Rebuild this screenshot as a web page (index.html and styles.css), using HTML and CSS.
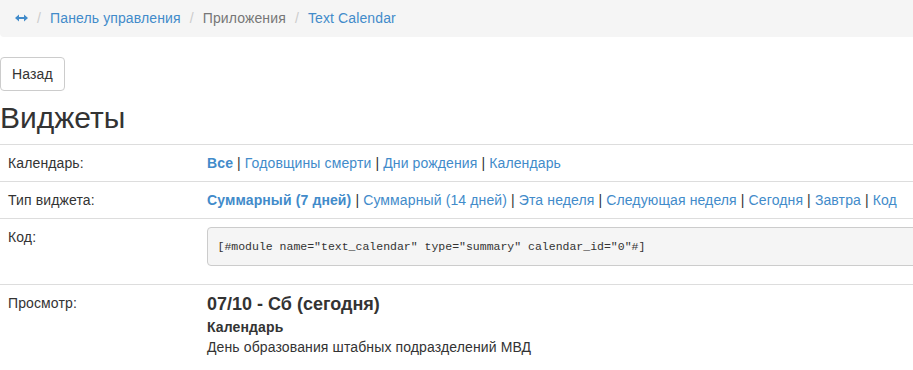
FILE: index.html
```html
<!DOCTYPE html>
<html lang="ru">

<head>
    <meta charset="UTF-8">
    <title>Виджеты - Text Calendar</title>
    <link rel="stylesheet" href="styles.css">
</head>

<body>
    <div class="page">
        <ol class="breadcrumb">
            <li>
                <a href="#" class="home-icon"><svg width="13" height="8" viewBox="0 0 13 8">
                        <path d="M0 4 L4 0.5 L4 3 L9 3 L9 0.5 L13 4 L9 7.5 L9 5 L4 5 L4 7.5 Z" fill="#428bca"/>
                    </svg></a>
            </li>
            <li><a href="#">Панель управления</a></li>
            <li class="active">Приложения</li>
            <li><a href="#">Text Calendar</a></li>
        </ol>

        <a href="#" class="btn">Назад</a>

        <h2>Виджеты</h2>

        <table class="table">
            <tr>
                <td class="label-cell">Календарь:</td>
                <td>
                    <a href="#" class="current">Все</a> |
                    <a href="#">Годовщины смерти</a> |
                    <a href="#">Дни рождения</a> |
                    <a href="#">Календарь</a>
                </td>
            </tr>
            <tr>
                <td class="label-cell">Тип виджета:</td>
                <td>
                    <a href="#" class="current">Суммарный (7 дней)</a> |
                    <a href="#">Суммарный (14 дней)</a> |
                    <a href="#">Эта неделя</a> |
                    <a href="#">Следующая неделя</a> |
                    <a href="#">Сегодня</a> |
                    <a href="#">Завтра</a> |
                    <a href="#">Код</a>
                </td>
            </tr>
            <tr>
                <td class="label-cell">Код:</td>
                <td>
                    <pre>[#module name="text_calendar" type="summary" calendar_id="0"#]</pre>
                </td>
            </tr>
            <tr>
                <td class="label-cell">Просмотр:</td>
                <td>
                    <div class="preview">
                        <h4>07/10 - Сб (сегодня)</h4>
                        <div class="cal-name">Календарь</div>
                        <div>День образования штабных подразделений МВД</div>
                    </div>
                </td>
            </tr>
        </table>
    </div>
</body>

</html>
```

FILE: styles.css
```css
body {
    margin: 0;
    font-family: "Liberation Sans", Arial, sans-serif;
    font-size: 14px;
    line-height: 20px;
    letter-spacing: 0.12px;
    color: #333;
    background: #fff;
    overflow: hidden;
}

a {
    color: #428bca;
    text-decoration: none;
}

.page {
    width: 930px;
}

.breadcrumb {
    list-style: none;
    margin: 0 0 20px 0;
    padding: 8px 15px 9px 15px;
    background-color: #f5f5f5;
    border-radius: 0 0 0 4px;
}

.breadcrumb li {
    display: inline-block;
}

.breadcrumb li + li:before {
    content: "/\00a0";
    padding: 0 5px;
    color: #ccc;
}

.breadcrumb .active {
    color: #777;
}

.home-icon svg {
    vertical-align: 1px;
}

.btn {
    display: inline-block;
    padding: 6px 11px;
    line-height: 20px;
    color: #333;
    background-color: #fff;
    border: 1px solid #ccc;
    border-radius: 4px;
}

h2 {
    font-size: 30px;
    font-weight: normal;
    line-height: 33px;
    letter-spacing: 0;
    margin: 10px 0;
}

.table {
    width: 100%;
    border-collapse: collapse;
}

.table td {
    padding: 8px;
    border-top: 1px solid #ddd;
    vertical-align: top;
}

.table .label-cell {
    width: 183px;
}

.current {
    font-weight: bold;
}

pre {
    margin: 0 0 10px 0;
    padding: 10px 9.5px 9px 9.5px;
    font-family: "Liberation Mono", "Courier New", monospace;
    font-size: 11.5px;
    line-height: 18px;
    letter-spacing: 0;
    color: #333;
    background-color: #f5f5f5;
    border: 1px solid #ccc;
    border-radius: 4px;
}

.preview h4 {
    font-size: 18px;
    font-weight: bold;
    line-height: 22px;
    letter-spacing: 0;
    margin: 0;
}

.cal-name {
    font-weight: bold;
    margin-top: 2px;
}
```
